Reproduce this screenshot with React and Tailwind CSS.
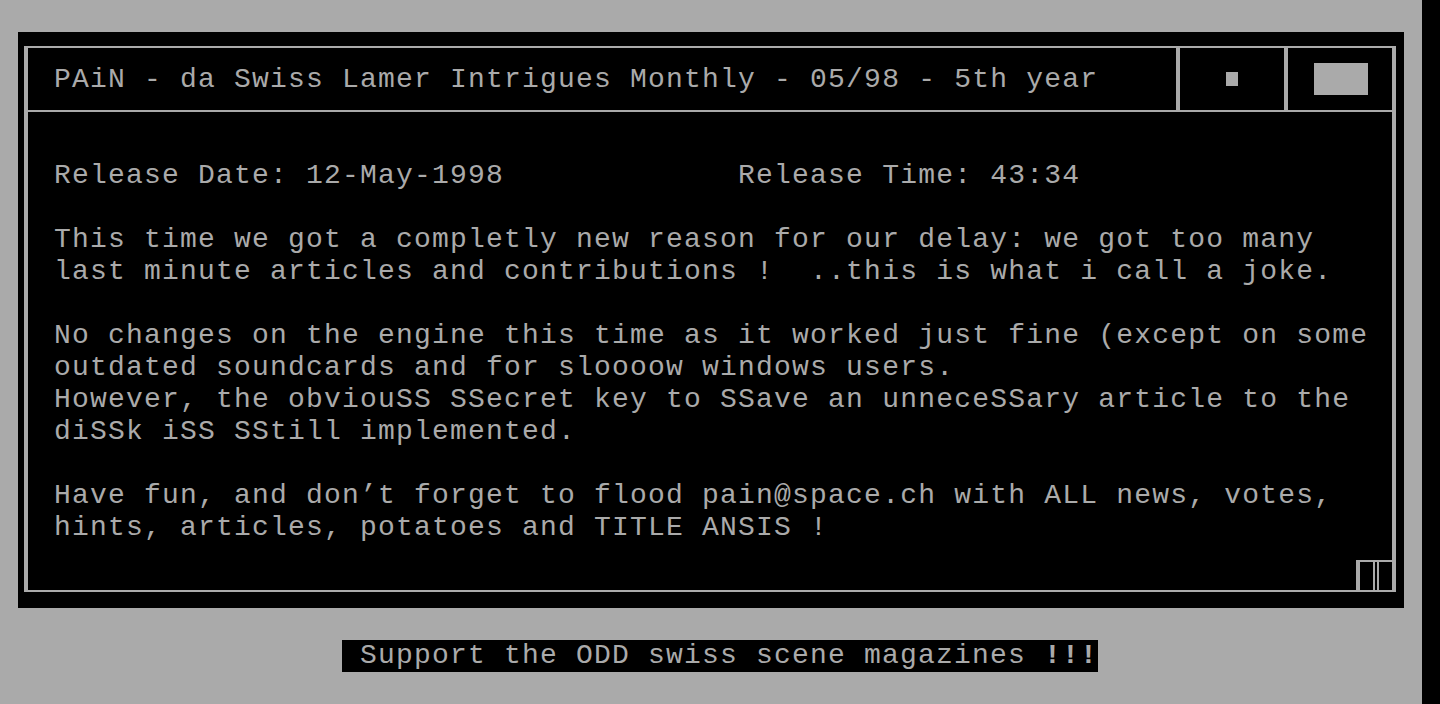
export default function App() {
  const mono = { fontFamily: '"Liberation Mono", "DejaVu Sans Mono", monospace' };
  const lines = [
    "Release Date: 12-May-1998             Release Time: 43:34",
    "",
    "This time we got a completly new reason for our delay: we got too many",
    "last minute articles and contributions !  ..this is what i call a joke.",
    "",
    "No changes on the engine this time as it worked just fine (except on some",
    "outdated soundcards and for sloooow windows users.",
    "However, the obviouSS SSecret key to SSave an unneceSSary article to the",
    "diSSk iSS SStill implemented.",
    "",
    "Have fun, and don\u2019t forget to flood pain@space.ch with ALL news, votes,",
    "hints, articles, potatoes and TITLE ANSIS !",
  ];
  return (
    <div
      className="flex w-[1440px] h-[704px] overflow-hidden bg-[#aaaaaa] text-[#aaaaaa] text-[28px] leading-[32px] tracking-[1.2px]"
      style={mono}
    >
      <div className="w-[1422px] h-[704px] pl-[18px] pt-[32px] flex flex-col">
        {/* window */}
        <div className="w-[1386px] h-[576px] bg-black pl-[6px] pt-[14px]">
          <div className="w-[1372px] h-[546px] border-[#aaaaaa] border-l-4 border-r-4 border-t-2 border-b-2 flex flex-col">
            {/* title bar */}
            <div className="flex h-[62px] shrink-0">
              <div className="w-[1148px] pl-[26px] pt-[16px] whitespace-pre">
                PAiN - da Swiss Lamer Intrigues Monthly - 05/98 - 5th year
              </div>
              <div className="w-[4px] bg-[#aaaaaa]" />
              <div className="w-[104px] flex items-center justify-center">
                <div className="w-[12px] h-[14px] bg-[#aaaaaa]" />
              </div>
              <div className="w-[4px] bg-[#aaaaaa]" />
              <div className="w-[104px] flex items-center justify-center">
                <div className="w-[54px] h-[32px] bg-[#aaaaaa] ml-[2px]" />
              </div>
            </div>
            <div className="h-[2px] bg-[#aaaaaa] shrink-0" />
            {/* body */}
            <div className="flex-1 flex flex-col">
              <div className="pl-[26px] pt-[48px] whitespace-pre">
                {lines.map((l, i) => (
                  <div key={i} className="h-[32px]">
                    {l}
                  </div>
                ))}
              </div>
              <div className="flex-1" />
              <div className="flex justify-end">
                <div className="w-[36px] h-[30px] border-t-2 border-[#aaaaaa] flex">
                  <div className="w-[4px] h-full bg-[#aaaaaa]" />
                  <div className="w-[13px]" />
                  <div className="w-[2px] h-full bg-[#aaaaaa]" />
                  <div className="w-[2px]" />
                  <div className="w-[2px] h-full bg-[#aaaaaa]" />
                </div>
              </div>
            </div>
          </div>
        </div>
        {/* banner */}
        <div className="mt-[32px] ml-[324px] w-[756px] h-[32px] bg-black whitespace-pre">
          {" Support the ODD swiss scene magazines "}
          <span className="font-bold">!!!</span>
        </div>
      </div>
      <div className="w-[18px] h-[704px] bg-black" />
    </div>
  );
}
